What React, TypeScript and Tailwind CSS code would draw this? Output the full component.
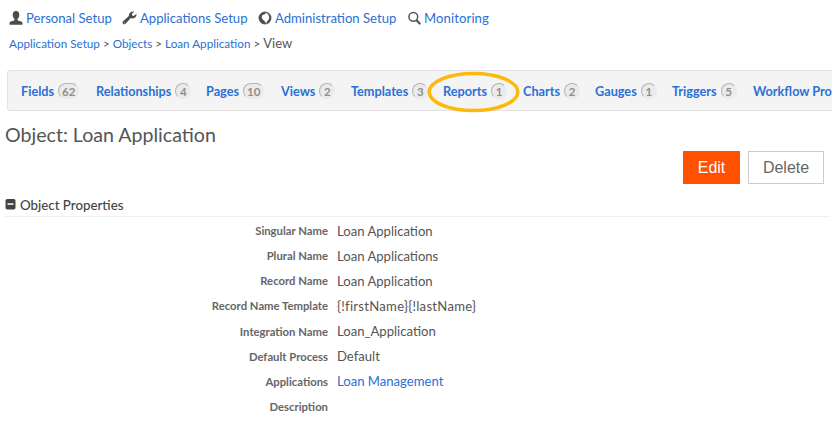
import type { ReactNode } from "react";

const link = "text-[#2a70d4]";

const tabs = [
  { label: "Fields", count: 62, box: "w-[75px]" },
  { label: "Relationships", count: 4, box: "w-[110px]" },
  { label: "Pages", count: 10, box: "w-[75px]" },
  { label: "Views", count: 2, box: "w-[70px]" },
  { label: "Templates", count: 3, box: "w-[92px]" },
  { label: "Reports", count: 1, box: "w-[80px]" },
  { label: "Charts", count: 2, box: "w-[72px]" },
  { label: "Gauges", count: 1, box: "w-[77px]" },
  { label: "Triggers", count: 5, box: "w-[81px]" },
  { label: "Workflow Pro", count: 0, box: "w-[78px]" },
];

const rows: { label: string; value: string; tone?: string }[] = [
  { label: "Singular Name", value: "Loan Application" },
  { label: "Plural Name", value: "Loan Applications" },
  { label: "Record Name", value: "Loan Application" },
  { label: "Record Name Template", value: "{!firstName}{!lastName}", tone: "tracking-[0.28px]" },
  { label: "Integration Name", value: "Loan_Application" },
  { label: "Default Process", value: "Default" },
  { label: "Applications", value: "Loan Management", tone: link },
  { label: "Description", value: "" },
];

function UserIcon() {
  return (
    <svg width="14" height="14" viewBox="0 0 14 14" fill="#4b4b4b">
      <path d="M7 0C4.700 0 3.700 1.500 3.700 3.700c0 1.800.7 3.400 1.800 4.300v1.300C4.500 9.900.9 10.200.5 12v1.700h13V12C13.100 10.200 9.500 9.900 8.500 9.300V8c1.100-.9 1.800-2.500 1.800-4.300C10.300 1.500 9.300 0 7 0z" />
    </svg>
  );
}

function WrenchIcon() {
  return (
    <svg width="15" height="14" viewBox="0 0 15 14" fill="#4b4b4b">
      <path d="M12.300.6 9.800 2.900l.4 1.600 1.600.4 2.600-2.200c.5 2.600-1.300 4.700-3.700 4.700-.8 0-1.400-.2-1.900-.4L3.300 13c-1.700 1.200-3.700-.8-2.500-2.500L6.900 5C6.500 2.100 9.300-.2 12.300.6z" />
      <circle cx="2.200" cy="11.800" r="0.500" fill="#fff" />
    </svg>
  );
}

function GlobeIcon() {
  return (
    <svg width="14" height="14" viewBox="0 0 14 14">
      <circle cx="7" cy="7" r="5.900" fill="#fff" stroke="#666" strokeWidth="1.200" />
      <path d="M5.500 1.400C2.700 2 1 4.300 1.100 7.200c.2 2.500 1.700 4.700 4.100 5.500l2.500.3-.4-2.200-2.600-2.200L3.600 6.200 4.400 4l2.400-.8L8.500 1.500zM9 2l1.500 2 .8 3-1.100 2.600-1.700 1.400.3 1.800c2.400-.7 4-2.900 4-5.600C12.800 4.800 11.200 2.500 9 2z" fill="#4b4b4b" />
    </svg>
  );
}

function SearchIcon() {
  return (
    <svg width="13" height="14" viewBox="0 0 13 14" fill="none" stroke="#555">
      <circle cx="5.300" cy="5.800" r="4.400" strokeWidth="1.500" />
      <path d="m8.900 9.600 2.700 2.900" strokeWidth="2.200" strokeLinecap="round" />
    </svg>
  );
}

function NavItem({ icon, label, box }: { icon: ReactNode; label: string; box: string }) {
  return (
    <a className={`flex shrink-0 items-center gap-[3px] ${box}`}>
      <span className="shrink-0">{icon}</span>
      <span className="pt-px">{label}</span>
    </a>
  );
}

export default function App() {
  return (
    <div className="h-[442px] w-[832px] overflow-hidden bg-white pt-[7px] font-['Lato',sans-serif] whitespace-nowrap text-[#555]">
      <nav className={`flex h-[22px] items-center pl-[9px] text-[13.1px] ${link}`}>
        <NavItem icon={<UserIcon />} label="Personal Setup" box="w-[113px]" />
        <NavItem icon={<WrenchIcon />} label="Applications Setup" box="w-[136px]" />
        <NavItem icon={<GlobeIcon />} label="Administration Setup" box="w-[150px]" />
        <NavItem icon={<SearchIcon />} label="Monitoring" box="w-[90px] tracking-[0.1px]" />
      </nav>

      <div className="mt-[5px] flex h-5 items-center gap-[3px] pl-[9px] text-[11.700px]">
        <a className={link}>Application Setup</a>
        <span>&gt;</span>
        <a className={link}>Objects</a>
        <span>&gt;</span>
        <a className={link}>Loan Application</a>
        <span>&gt;</span>
        <span className="text-[13px]">View</span>
      </div>

      <div className="mt-4 ml-[7px] flex h-[41px] w-[825px] items-center rounded-l-[3px] border border-r-0 border-[#e2e2e2] bg-[#f4f4f4] pt-[2px] pl-[13px] text-[12.700px] font-bold">
        {tabs.map((t) => (
          <a key={t.label} className={`flex shrink-0 items-center gap-1 ${t.box} ${link}`}>
            <span>{t.label}</span>
            {t.count > 0 && (
              <span className="flex h-4 min-w-4 items-center justify-center rounded-full border border-t-[#b4b4b4] border-r-[#eaeaea] border-b-[#eaeaea] border-l-[#b4b4b4] bg-[#ebebeb] px-[3px] text-[11.500px] text-[#8e8e8e]">
                {t.count}
              </span>
            )}
          </a>
        ))}
      </div>

      <h1 className="mt-3 pl-[5px] text-[19.600px] leading-6">Object: Loan Application</h1>

      <div className="mt-1 flex h-[33px] justify-end gap-2 pr-2 font-['Liberation_Sans',sans-serif] text-[16px]">
        <button className="w-[57px] bg-[#ff5100] text-white">Edit</button>
        <button className="w-[76px] border border-[#ccc] bg-white text-[#666]">Delete</button>
      </div>

      <div className="mt-[9px] ml-[5px] flex h-[24px] w-[825px] items-center gap-1 border-b border-[#f0f0f0] text-[13.300px] text-[#444]">
        <svg width="11" height="11" viewBox="0 0 11 11">
          <rect x="0.500" y="0" width="10" height="10.500" rx="1.800" fill="#444" />
          <rect x="2.500" y="4.300" width="6" height="1.500" fill="#fff" />
        </svg>
        <h2 className="pt-[2px] font-medium">Object Properties</h2>
      </div>

      <dl className="mt-[2px]">
        {rows.map((r) => (
          <div key={r.label} className="flex h-[25.140px] items-center">
            <dt className="w-[328px] text-right text-[11.300px] font-bold text-[#666]">{r.label}</dt>
            <dd className={`pl-[9px] text-[13.100px] ${r.tone ?? ""}`}>{r.value}</dd>
          </div>
        ))}
      </dl>

      <svg className="absolute top-[71px] left-[427px]" width="94" height="42" viewBox="0 0 94 42" fill="none">
        <ellipse cx="46.500" cy="21" rx="44.300" ry="18.500" stroke="#fdb90b" strokeWidth="3.500" />
      </svg>
    </div>
  );
}
